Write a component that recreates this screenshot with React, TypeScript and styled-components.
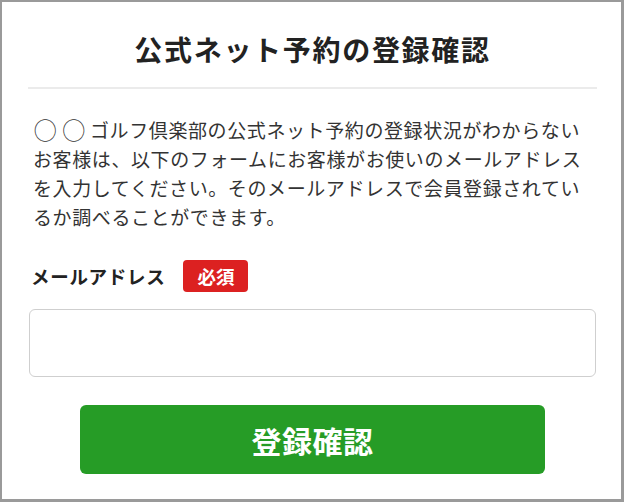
import React from "react";
import styled, { createGlobalStyle } from "styled-components";

const Global = createGlobalStyle`
  html, body { margin: 0; padding: 0; background: #fff; }
  body { font-family: "Noto Sans CJK JP", "Noto Sans", sans-serif; color: #333; }
  * { box-sizing: border-box; }
`;

const Frame = styled.div`
  width: 624px;
  height: 502px;
  border-style: solid;
  border-color: #9a9a9a;
  border-width: 2px 3px 3px 2px;
  display: flex;
  flex-direction: column;
  background: #fff;
`;

const Header = styled.header`
  margin: 0 24px 0 26px;
  padding: 26px 0 17px;
  border-bottom: 2px solid #ebebeb;
  text-align: center;
`;

const Title = styled.h1`
  margin: 0;
  font-size: 28px;
  line-height: 42px;
  font-weight: 700;
  letter-spacing: 1.7px;
  color: #222;
`;

const Body = styled.main`
  padding: 26px 26px 0 31px;
  display: flex;
  flex-direction: column;
`;

const Lead = styled.p`
  margin: 0;
  font-size: 19px;
  line-height: 29px;
  letter-spacing: 0.6px;
  color: #333;
`;

const Circles = styled.span`
  display: inline-block;
  font-size: 22.5px;
  letter-spacing: 6px;
  line-height: 20px;
  vertical-align: -1px;
  margin-left: 1px;
  margin-right: -1px;
`;

const LabelRow = styled.div`
  display: flex;
  align-items: center;
  gap: 18px;
  margin: 29px 0 0 -2px;
  height: 32px;
`;

const Label = styled.label`
  font-size: 18.5px;
  font-weight: 700;
  letter-spacing: 0.7px;
  color: #222;
`;

const Badge = styled.span`
  display: inline-flex;
  align-items: center;
  justify-content: center;
  height: 32px;
  width: 65px;
  border-radius: 4px;
  background: #dc2121;
  color: #fff;
  font-size: 18.5px;
  font-weight: 700;
`;

const Input = styled.input`
  margin: 17px 0 0 -4px;
  width: 567px;
  height: 68px;
  border: 1px solid #cfcfcf;
  border-radius: 6px;
  font-size: 18px;
  padding: 0 14px;
  outline: none;
`;

const Submit = styled.button`
  align-self: flex-start;
  margin: 28px 0 0 47px;
  width: 465px;
  height: 69px;
  border: none;
  border-radius: 6px;
  background: #269c26;
  color: #fff;
  font-family: inherit;
  font-size: 30px;
  font-weight: 700;
  letter-spacing: 0.5px;
  cursor: pointer;
`;

export default function App() {
  return (
    <>
      <Global />
      <Frame>
        <Header>
          <Title>公式ネット予約の登録確認</Title>
        </Header>
        <Body>
          <Lead>
            <Circles>◯◯</Circles>ゴルフ倶楽部の公式ネット予約の登録状況がわからないお客様は、以下のフォームにお客様がお使いのメールアドレスを入力してください。そのメールアドレスで会員登録されているか調べることができます。
          </Lead>
          <LabelRow>
            <Label htmlFor="email">メールアドレス</Label>
            <Badge>必須</Badge>
          </LabelRow>
          <Input id="email" type="email" />
          <Submit type="button">登録確認</Submit>
        </Body>
      </Frame>
    </>
  );
}
